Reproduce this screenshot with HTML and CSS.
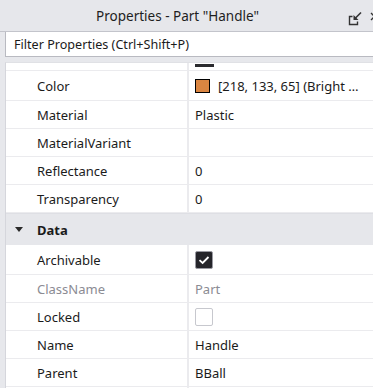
FILE: index.html
```html
<!DOCTYPE html>
<html>
<head>
<meta charset="utf-8">
<link rel="stylesheet" href="styles.css">
</head>
<body>
<div class="window">
  <div class="titlebar">
    <div class="title">Properties - Part "Handle"</div>
    <div class="tb-icons">
      <svg class="undock" width="16" height="16" viewBox="0 0 16 16">
        <path d="M5.5 6.5 H2.5 V14.5 H10.5 V11.5" fill="none" stroke="#333" stroke-width="1.4"/>
        <path d="M14 2.5 L8 8.5" stroke="#333" stroke-width="1.6"/>
        <path d="M6.5 5 V10 H11.5 Z" fill="#333"/>
      </svg>
      <svg class="close" width="9" height="9" viewBox="0 0 9 9">
        <path d="M1 1 L8 8 M8 1 L1 8" stroke="#333" stroke-width="1.3"/>
      </svg>
    </div>
  </div>
  <div class="filter">Filter Properties (Ctrl+Shift+P)</div>
  <div class="grid">
    <div class="row partial">
      <div class="name"></div>
      <div class="value"><span class="bar"></span></div>
    </div>
    <div class="row tall">
      <div class="name">Color</div>
      <div class="value"><span class="swatch"></span>[218, 133, 65] (Bright …</div>
    </div>
    <div class="row">
      <div class="name">Material</div>
      <div class="value">Plastic</div>
    </div>
    <div class="row">
      <div class="name">MaterialVariant</div>
      <div class="value"></div>
    </div>
    <div class="row">
      <div class="name">Reflectance</div>
      <div class="value">0</div>
    </div>
    <div class="row">
      <div class="name">Transparency</div>
      <div class="value">0</div>
    </div>
    <div class="section">
      <span class="caret"></span>
      <span class="section-name">Data</span>
    </div>
    <div class="row tall">
      <div class="name">Archivable</div>
      <div class="value"><span class="check on"><svg width="12" height="10" viewBox="0 0 12 10"><path d="M1.5 5.2 L4.6 8 L10.5 2" fill="none" stroke="#fff" stroke-width="1.8"/></svg></span></div>
    </div>
    <div class="row dim">
      <div class="name">ClassName</div>
      <div class="value">Part</div>
    </div>
    <div class="row">
      <div class="name">Locked</div>
      <div class="value"><span class="check"></span></div>
    </div>
    <div class="row">
      <div class="name">Name</div>
      <div class="value">Handle</div>
    </div>
    <div class="row">
      <div class="name">Parent</div>
      <div class="value">BBall</div>
    </div>
    <div class="row">
      <div class="name"></div>
      <div class="value"></div>
    </div>
  </div>
</div>
</body>
</html>
```
FILE: styles.css
```css
html, body {
  margin: 0;
  padding: 0;
}
body {
  width: 373px;
  height: 388px;
  overflow: hidden;
  background: #e7e8ec;
  font-family: "Noto Sans", "Open Sans", sans-serif;
  font-size: 13px;
  color: #1b1b1b;
}
.window {
  width: 373px;
  height: 388px;
  display: flex;
  flex-direction: column;
  overflow: hidden;
}
.titlebar {
  height: 31px;
  flex: none;
  display: flex;
  align-items: center;
  background: #e6e7eb;
  border-bottom: 1px solid #c3c4cb;
}
.title {
  flex: 1;
  text-align: center;
  padding-left: 16px;
  margin-right: 8px;
  font-size: 13.5px;
  color: #1e1e1e;
}
.tb-icons {
  display: flex;
  align-items: center;
  gap: 7px;
  margin-right: -6px;
  flex: none;
}
.undock {
  display: block;
  margin-top: 4px;
}
.close {
  display: block;
  margin-top: 1px;
}
.filter {
  flex: none;
  height: 24px;
  margin-left: 5px;
  width: 400px;
  background: #fff;
  border: 1px solid #b9bac1;
  border-top: none;
  display: flex;
  align-items: center;
  padding-left: 8px;
  font-size: 12.6px;
  color: #1b1b1b;
}
.grid {
  flex: 1;
  margin-top: 5px;
  margin-left: 5px;
  width: 400px;
  background: #fff;
  border-left: 1px solid #d5d6dc;
  border-top: 1px solid #e0e1e5;
  overflow: hidden;
}
.row {
  display: grid;
  grid-template-columns: 183px 1fr;
  height: 27px;
  border-bottom: 1px solid #ebebee;
}
.row.tall {
  height: 29px;
}
.row.partial {
  height: 7px;
  overflow: hidden;
}
.name {
  padding-left: 31px;
  border-right: 2px solid #ebebee;
  display: flex;
  align-items: center;
  white-space: nowrap;
}
.value {
  padding-left: 6px;
  display: flex;
  align-items: center;
  white-space: nowrap;
}
.partial .value {
  align-items: flex-start;
}
.bar {
  display: block;
  width: 19px;
  height: 3px;
  margin-top: 1px;
  background: #2b2b2f;
}
.swatch {
  width: 13px;
  height: 12px;
  background: rgb(218, 133, 65);
  border: 1px solid #000;
  margin-right: 8px;
}
.dim .name, .dim .value {
  color: #8b8b93;
}
.section {
  height: 31px;
  background: #e6e7eb;
  border-top: 1px solid #dedfe4;
  display: flex;
  align-items: center;
}
.caret {
  width: 0;
  height: 0;
  border-left: 4px solid transparent;
  border-right: 4px solid transparent;
  border-top: 5px solid #2a2a2a;
  margin-left: 9px;
  margin-right: 14px;
}
.section-name {
  font-weight: bold;
}
.check {
  width: 18px;
  height: 18px;
  box-sizing: border-box;
  border: 1px solid #c7c8ce;
  border-radius: 2px;
  background: #fff;
  display: flex;
  align-items: center;
  justify-content: center;
}
.check.on {
  background: #25252a;
  border-color: #9a9aa2;
}
```
